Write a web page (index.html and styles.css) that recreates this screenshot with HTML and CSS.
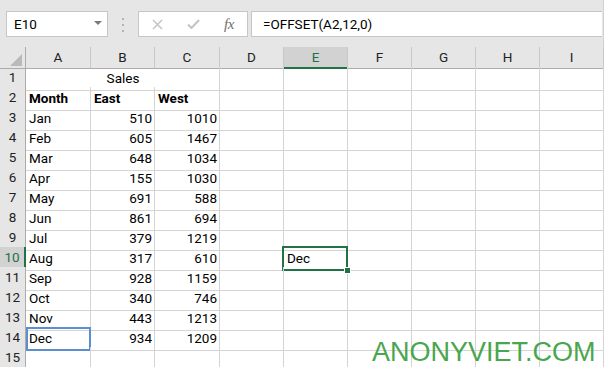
FILE: index.html
```html
<!DOCTYPE html>
<html lang="en">
<head>
  <meta charset="UTF-8">
  <title>OFFSET</title>
  <link rel="stylesheet" href="styles.css">
</head>
<body>
  <div class="formula-area">
    <div class="namebox">E10<span class="drop"></span></div>
    <div class="grip">
      <svg width="2" height="14" viewBox="0 0 2 14"><rect y="0" width="2" height="2" fill="#b4b4b4"/><rect y="6" width="2" height="2" fill="#b4b4b4"/><rect y="12" width="2" height="2" fill="#b4b4b4"/></svg>
    </div>
    <div class="fx-buttons">
      <span class="btn"><svg width="11" height="11" viewBox="0 0 11 11"><path d="M1 1 L10 10 M10 1 L1 10" stroke="#c4c4c4" stroke-width="1.5" fill="none"/></svg></span>
      <span class="btn"><svg width="13" height="10" viewBox="0 0 13 10"><path d="M1 5.5 L4.5 9 L12 1" stroke="#c4c4c4" stroke-width="2" fill="none"/></svg></span>
      <span class="btn fx">fx</span>
    </div>
    <div class="formula">=OFFSET(A2,12,0)</div>
  </div>

  <div class="sheet">
    <div class="row head">
      <div class="corner"><span class="tri"></span></div>
      <div class="ch">A</div><div class="ch">B</div><div class="ch">C</div><div class="ch">D</div>
      <div class="ch sel">E</div><div class="ch">F</div><div class="ch">G</div><div class="ch">H</div><div class="ch">I</div>
    </div>
    <div class="row">
      <div class="rh">1</div>
      <div class="c merged">Sales</div>
      <div class="c"></div><div class="c"></div><div class="c"></div><div class="c"></div><div class="c"></div><div class="c"></div>
    </div>
    <div class="row">
      <div class="rh">2</div>
      <div class="c b">Month</div><div class="c b">East</div><div class="c b">West</div>
      <div class="c"></div><div class="c"></div><div class="c"></div><div class="c"></div><div class="c"></div><div class="c"></div>
    </div>
    <div class="row">
      <div class="rh">3</div>
      <div class="c">Jan</div><div class="c num">510</div><div class="c num">1010</div>
      <div class="c"></div><div class="c"></div><div class="c"></div><div class="c"></div><div class="c"></div><div class="c"></div>
    </div>
    <div class="row">
      <div class="rh">4</div>
      <div class="c">Feb</div><div class="c num">605</div><div class="c num">1467</div>
      <div class="c"></div><div class="c"></div><div class="c"></div><div class="c"></div><div class="c"></div><div class="c"></div>
    </div>
    <div class="row">
      <div class="rh">5</div>
      <div class="c">Mar</div><div class="c num">648</div><div class="c num">1034</div>
      <div class="c"></div><div class="c"></div><div class="c"></div><div class="c"></div><div class="c"></div><div class="c"></div>
    </div>
    <div class="row">
      <div class="rh">6</div>
      <div class="c">Apr</div><div class="c num">155</div><div class="c num">1030</div>
      <div class="c"></div><div class="c"></div><div class="c"></div><div class="c"></div><div class="c"></div><div class="c"></div>
    </div>
    <div class="row">
      <div class="rh">7</div>
      <div class="c">May</div><div class="c num">691</div><div class="c num">588</div>
      <div class="c"></div><div class="c"></div><div class="c"></div><div class="c"></div><div class="c"></div><div class="c"></div>
    </div>
    <div class="row">
      <div class="rh">8</div>
      <div class="c">Jun</div><div class="c num">861</div><div class="c num">694</div>
      <div class="c"></div><div class="c"></div><div class="c"></div><div class="c"></div><div class="c"></div><div class="c"></div>
    </div>
    <div class="row">
      <div class="rh">9</div>
      <div class="c">Jul</div><div class="c num">379</div><div class="c num">1219</div>
      <div class="c"></div><div class="c"></div><div class="c"></div><div class="c"></div><div class="c"></div><div class="c"></div>
    </div>
    <div class="row">
      <div class="rh sel">10</div>
      <div class="c">Aug</div><div class="c num">317</div><div class="c num">610</div>
      <div class="c"></div><div class="c active">Dec</div><div class="c"></div><div class="c"></div><div class="c"></div><div class="c"></div>
    </div>
    <div class="row">
      <div class="rh">11</div>
      <div class="c">Sep</div><div class="c num">928</div><div class="c num">1159</div>
      <div class="c"></div><div class="c"></div><div class="c"></div><div class="c"></div><div class="c"></div><div class="c"></div>
    </div>
    <div class="row">
      <div class="rh">12</div>
      <div class="c">Oct</div><div class="c num">340</div><div class="c num">746</div>
      <div class="c"></div><div class="c"></div><div class="c"></div><div class="c"></div><div class="c"></div><div class="c"></div>
    </div>
    <div class="row">
      <div class="rh">13</div>
      <div class="c">Nov</div><div class="c num">443</div><div class="c num">1213</div>
      <div class="c"></div><div class="c"></div><div class="c"></div><div class="c"></div><div class="c"></div><div class="c"></div>
    </div>
    <div class="row">
      <div class="rh">14</div>
      <div class="c ref">Dec</div><div class="c num">934</div><div class="c num">1209</div>
      <div class="c"></div><div class="c"></div><div class="c"></div><div class="c"></div><div class="c"></div><div class="c"></div>
    </div>
    <div class="row">
      <div class="rh">15</div>
      <div class="c"></div><div class="c"></div><div class="c"></div>
      <div class="c"></div><div class="c"></div><div class="c"></div><div class="c"></div><div class="c"></div><div class="c"></div>
    </div>
  </div>

  <div class="watermark">ANONYVIET.COM</div>
</body>
</html>
```

FILE: styles.css
```css
body { margin: 0; width: 604px; height: 367px; overflow: hidden; position: relative; background: #fff; color: #000; font-family: Roboto, "Liberation Sans", sans-serif; font-size: 13.5px; }

/* formula bar */
.formula-area { height: 47px; box-sizing: border-box; padding: 11px 1px 0 6px; background: #e6e6e6; display: flex; align-items: flex-start; border-right: 1px solid #d0d0d0; }
.namebox { position: relative; width: 102px; height: 26px; box-sizing: border-box; border: 1px solid #c6c6c6; background: #fff; padding-left: 7px; line-height: 24px; }
.drop { position: absolute; right: 5px; top: 9px; width: 0; height: 0; border-left: 4px solid transparent; border-right: 4px solid transparent; border-top: 4px solid #7a7a7a; }
.grip { width: 30px; display: flex; justify-content: center; padding-top: 7px; }
.fx-buttons { width: 110px; height: 26px; box-sizing: border-box; border: 1px solid #c6c6c6; background: #fff; display: flex; align-items: center; }
.btn { width: 36px; display: flex; justify-content: center; align-items: center; }
.btn svg { display: block; }
.fx { font-family: "Liberation Serif", serif; font-style: italic; font-size: 15px; color: #6e6e6e; letter-spacing: -0.5px; }
.formula { flex: 1; margin-left: 3px; height: 26px; box-sizing: border-box; border: 1px solid #c6c6c6; border-right: none; background: #fff; padding-left: 11px; line-height: 24px; }

/* grid */
.row { display: grid; grid-template-columns: 26px 65px 64px 65px 64px 64px 64px 64px 64px 64px; height: 20px; }
.corner { position: relative; background: #e6e6e6; border-right: 1px solid #ababab; border-bottom: 1px solid #ababab; }
.tri { position: absolute; right: 3px; bottom: 2px; width: 0; height: 0; border-left: 12px solid transparent; border-bottom: 12px solid #b9b9b9; }
.ch { background: #e6e6e6; border-right: 1px solid #c8c8c8; border-bottom: 1px solid #ababab; box-sizing: border-box; text-align: center; line-height: 19px; padding-top: 1px; color: #222; }
.ch.sel { background: #d2d2d2; color: #217346; border-bottom: 2px solid #217346; }
.rh { background: #e6e6e6; border-right: 1px solid #ababab; border-bottom: 1px solid #d0d0d0; box-sizing: border-box; text-align: center; line-height: 19px; padding-top: 1px; color: #222; }
.rh.sel { background: #d2d2d2; color: #217346; border-right: 2px solid #217346; }
.c { position: relative; border-right: 1px solid #d4d4d4; border-bottom: 1px solid #d4d4d4; box-sizing: border-box; padding: 0 2px 0 3px; line-height: 23px; white-space: nowrap; }
.c.merged { grid-column: span 3; text-align: center; }
.c.b { font-weight: bold; }
.c.num { text-align: right; }
.c.active::after { content: ""; position: absolute; top: -1px; left: -2px; right: -1px; bottom: -1px; border: 2px solid #217346; }
.c.active::before { content: ""; position: absolute; right: -4px; bottom: -4px; width: 5px; height: 5px; background: #217346; border: 1px solid #fff; z-index: 1; }
.c.ref::after { content: ""; position: absolute; top: 0; left: 0; right: -1px; bottom: -1px; border: 2px solid #5b8fd0; }

.watermark { position: absolute; left: 372px; top: 339px; font-family: "Liberation Sans", sans-serif; font-size: 27px; line-height: 27px; color: #4aa64e; }
```
